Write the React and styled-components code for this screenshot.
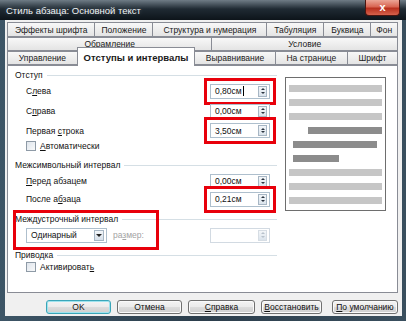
import styled, { createGlobalStyle } from "styled-components";

const GlobalStyle = createGlobalStyle`
  body {
    margin: 0;
    font-family: "Liberation Sans", Arial, sans-serif;
    font-size: 8.5px;
  }
`;

const Window = styled.div`
  width: 406px;
  height: 321px;
  display: flex;
  flex-direction: column;
  background: linear-gradient(to right, #3d5566, #2c3e4c 50%, #3a4f5e);
  box-sizing: border-box;
`;

const TitleBar = styled.div`
  height: 20px;
  flex-shrink: 0;
  display: flex;
  align-items: flex-start;
  justify-content: space-between;
  background: linear-gradient(to bottom, #6f7c86, #1f2a33 45%, #0d141a);
  padding-left: 6px;
`;

const Title = styled.span`
  color: #eef2f5;
  font-size: 9.5px;
  line-height: 21px;
  text-shadow: 0 0 4px rgba(255, 255, 255, 0.25);
`;

const CloseButton = styled.div`
  width: 33px;
  height: 15px;
  margin-right: 6px;
  border: 1px solid #4a1510;
  border-top: none;
  border-radius: 0 0 4px 4px;
  background: linear-gradient(to bottom, #eba596, #d86552 45%, #b8301e 55%, #d6624c);
  color: #fff;
  font-weight: bold;
  font-size: 11px;
  display: grid;
  place-items: center;
  line-height: 1;
`;

const Body = styled.div`
  flex: 1;
  margin: 0 4px 5px 5px;
  background: #f0f0f0;
  display: flex;
  flex-direction: column;
  padding: 2px 4px 0 2px;
`;

const TabRow = styled.div`
  display: flex;
  align-items: flex-end;
  height: ${({ $h }) => $h}px;
`;

const Tab = styled.div`
  flex: ${({ $w }) => $w} 1 0;
  height: ${({ $active }) => ($active ? "19px" : "100%")};
  margin-bottom: ${({ $active }) => ($active ? "-1px" : "0")};
  margin-left: -1px;
  position: relative;
  z-index: ${({ $active }) => ($active ? 2 : 0)};
  border: 1px solid #898c95;
  border-bottom: ${({ $active }) => ($active ? "none" : "1px solid #898c95")};
  box-sizing: border-box;
  background: ${({ $active }) =>
    $active ? "#fff" : "linear-gradient(to bottom, #f8f8f8, #e4e4e4)"};
  font-weight: ${({ $active }) => ($active ? "bold" : "normal")};
  font-size: ${({ $active }) => ($active ? "9.5px" : "8.5px")};
  display: flex;
  align-items: center;
  justify-content: center;
  white-space: nowrap;
  color: #1a1a1a;

  &:first-child {
    margin-left: 0;
  }
`;

const Panel = styled.div`
  height: 228px;
  box-sizing: border-box;
  background: #fff;
  border: 1px solid #898c95;
  display: flex;
  gap: 8px;
  padding: 3px 0 0 7px;
`;

const LeftCol = styled.div`
  width: 262px;
  display: flex;
  flex-direction: column;
`;

const Group = styled.div`
  position: relative;
  display: flex;
  flex-direction: column;
  margin-top: ${({ $mt }) => $mt || 0}px;
`;

const GroupHeader = styled.div`
  height: 12px;
  display: flex;
  align-items: center;
  color: #111;
  white-space: nowrap;

  &::after {
    content: "";
    flex: 1;
    height: 1px;
    margin-left: 4px;
    background: #d5dfe5;
  }
`;

const Row = styled.div`
  height: ${({ $h }) => $h}px;
  margin-top: ${({ $mt }) => $mt || 0}px;
  display: flex;
  align-items: center;
  justify-content: space-between;
  padding: 0 7px 0 11px;
  color: #111;
`;

const U = styled.span`
  text-decoration: underline;
`;

const SpinBox = styled.div`
  width: 60px;
  height: 15px;
  box-sizing: border-box;
  border: 1px solid ${({ $disabled }) => ($disabled ? "#d2dae2" : "#aebfcd")};
  background: #fff;
  display: flex;
  align-items: center;
  justify-content: space-between;
  padding: 0 2px 0 4px;
  outline: ${({ $marked }) => ($marked ? "3px solid #e8000b" : "none")};
  outline-offset: 3px;
`;

const Caret = styled.span`
  display: inline-block;
  width: 1px;
  height: 10px;
  background: #000;
  vertical-align: middle;
  margin-left: 1px;
`;

const Spin = styled.div`
  width: 9px;
  height: 11px;
  box-sizing: border-box;
  border: 1px solid ${({ $disabled }) => ($disabled ? "#d6dde4" : "#a7b6c4")};
  background: linear-gradient(to bottom, #f3f6f9, #dbe4ec);
  display: flex;
  flex-direction: column;
  align-items: center;
  justify-content: space-evenly;
`;

const Arrow = styled.div`
  width: 0;
  height: 0;
  border-left: 2px solid transparent;
  border-right: 2px solid transparent;
  ${({ $down, $disabled }) =>
    $down
      ? `border-top: 2px solid ${$disabled ? "#b8c2cc" : "#2a3440"};`
      : `border-bottom: 2px solid ${$disabled ? "#b8c2cc" : "#2a3440"};`}
`;

const CheckRow = styled.label`
  height: 12px;
  display: flex;
  align-items: center;
  gap: 4px;
  padding-left: 11px;
  color: #111;
`;

const CheckBox = styled.span`
  width: 10px;
  height: 10px;
  box-sizing: border-box;
  border: 1px solid #8e9aa6;
  background: linear-gradient(135deg, #dfe5ec, #f8f9fa);
`;

const Select = styled.div`
  width: 81px;
  height: 15px;
  box-sizing: border-box;
  border: 1px solid #aebfcd;
  background: #fff;
  display: flex;
  align-items: center;
  justify-content: space-between;
  padding: 0 2px 0 4px;
`;

const SelectButton = styled.div`
  width: 10px;
  height: 11px;
  box-sizing: border-box;
  border: 1px solid #a7b6c4;
  background: linear-gradient(to bottom, #f3f6f9, #d6e0ea);
  display: grid;
  place-items: center;

  &::after {
    content: "";
    border-left: 3px solid transparent;
    border-right: 3px solid transparent;
    border-top: 3px solid #222;
  }
`;

const SizeLabel = styled.span`
  color: #a3a3a3;
  margin-left: 6px;
`;

const LeftPart = styled.div`
  display: flex;
  align-items: center;
`;

const RedBox = styled.div`
  position: absolute;
  left: -2px;
  top: -3px;
  width: 146px;
  height: 40px;
  box-sizing: border-box;
  border: 3px solid #e8000b;
  pointer-events: none;
`;

const Preview = styled.div`
  width: 101px;
  height: 134px;
  margin-top: 8px;
  box-sizing: border-box;
  border: 1px solid #6e6e6e;
  background: #fff;
  display: flex;
  flex-direction: column;
  gap: 7px;
  padding: 7px 3px 0 3px;
`;

const Line = styled.div`
  height: 7px;
  flex-shrink: 0;
  background: ${({ $dark }) => ($dark ? "#8c8c8c" : "#c6c6c6")};
  margin-left: ${({ $l }) => $l || 0}px;
  margin-right: ${({ $r }) => $r || 0}px;
`;

const ButtonBar = styled.div`
  display: flex;
  justify-content: flex-end;
  gap: 6px;
  margin-top: 7px;
`;

const Button = styled.div`
  width: ${({ $w }) => $w}px;
  margin-left: ${({ $ml }) => $ml || 0}px;
  height: 14px;
  box-sizing: border-box;
  border: 1px solid ${({ $default }) => ($default ? "#3aa6b9" : "#707070")};
  box-shadow: ${({ $default }) => ($default ? "inset 0 0 0 1px #9fe3ee" : "inset 0 0 0 1px #fafafa")};
  border-radius: 3px;
  background: linear-gradient(to bottom, #f4f4f4 0%, #ebebeb 50%, #dddddd 51%, #cfcfcf 100%);
  display: flex;
  align-items: center;
  justify-content: center;
  color: #111;
  font-size: 8.5px;
  white-space: nowrap;
`;

const tabRows = [
  {
    h: 15,
    tabs: [
      ["Эффекты шрифта", 88],
      ["Положение", 58],
      ["Структура и нумерация", 115],
      ["Табуляция", 57],
      ["Буквица", 47],
      ["Фон", 26],
    ],
  },
  {
    h: 14,
    tabs: [
      ["Обрамление", 205],
      ["Условие", 186],
    ],
  },
  {
    h: 14,
    tabs: [
      ["Управление", 70],
      ["Отступы и интервалы", 118, true],
      ["Выравнивание", 81],
      ["На странице", 72],
      ["Шрифт", 50],
    ],
  },
];

const previewLines = [
  {},
  {},
  {},
  { dark: true, l: 19 },
  { dark: true, l: 4, r: 5 },
  { dark: true, l: 4, r: 43 },
  {},
  {},
  {},
];

function Spinner({ value, marked, caret, disabled }) {
  return (
    <SpinBox $marked={marked} $disabled={disabled}>
      <span>
        {value}
        {caret && <Caret />}
      </span>
      <Spin $disabled={disabled}>
        <Arrow $disabled={disabled} />
        <Arrow $down $disabled={disabled} />
      </Spin>
    </SpinBox>
  );
}

function App() {
  return (
    <>
      <GlobalStyle />
      <Window>
        <TitleBar>
          <Title>Стиль абзаца: Основной текст</Title>
          <CloseButton>x</CloseButton>
        </TitleBar>
        <Body>
          {tabRows.map((row, i) => (
            <TabRow key={i} $h={row.h}>
              {row.tabs.map(([label, w, active]) => (
                <Tab key={label} $w={w} $active={active}>
                  {label}
                </Tab>
              ))}
            </TabRow>
          ))}
          <Panel>
            <LeftCol>
              <Group>
                <GroupHeader>Отступ</GroupHeader>
                <Row $h={20}>
                  <span>
                    С<U>л</U>ева
                  </span>
                  <Spinner value="0,80см" marked caret />
                </Row>
                <Row $h={20}>
                  <span>
                    С<U>п</U>рава
                  </span>
                  <Spinner value="0,00см" />
                </Row>
                <Row $h={19}>
                  <span>
                    Первая <U>с</U>трока
                  </span>
                  <Spinner value="3,50см" marked />
                </Row>
                <CheckRow>
                  <CheckBox />
                  <span>
                    <U>А</U>втоматически
                  </span>
                </CheckRow>
              </Group>
              <Group $mt={7}>
                <GroupHeader>Межсимвольный интервал</GroupHeader>
                <Row $h={18} $mt={1}>
                  <span>
                    <U>П</U>еред абзацем
                  </span>
                  <Spinner value="0,00см" />
                </Row>
                <Row $h={18}>
                  <span>
                    После а<U>б</U>заца
                  </span>
                  <Spinner value="0,21см" marked />
                </Row>
              </Group>
              <Group $mt={5}>
                <GroupHeader>Междустрочный интервал</GroupHeader>
                <Row $h={18} $mt={1}>
                  <LeftPart>
                    <Select>
                      <span>Одинарный</span>
                      <SelectButton />
                    </Select>
                    <SizeLabel>
                      ра<U>з</U>мер:
                    </SizeLabel>
                  </LeftPart>
                  <Spinner value="" disabled />
                </Row>
                <RedBox />
              </Group>
              <Group $mt={5}>
                <GroupHeader>Приводка</GroupHeader>
                <CheckRow>
                  <CheckBox />
                  <span>
                    Активироват<U>ь</U>
                  </span>
                </CheckRow>
              </Group>
            </LeftCol>
            <Preview>
              {previewLines.map((l, i) => (
                <Line key={i} $dark={l.dark} $l={l.l} $r={l.r} />
              ))}
            </Preview>
          </Panel>
          <ButtonBar>
            <Button $w={65} $default>
              OK
            </Button>
            <Button $w={65}>Отмена</Button>
            <Button $w={67}>
              <U>С</U>правка
            </Button>
            <Button $w={61}>
              <U>В</U>осстановить
            </Button>
            <Button $w={66} $ml={4}>
              <U>П</U>о умолчанию
            </Button>
          </ButtonBar>
        </Body>
      </Window>
    </>
  );
}

export default App;
